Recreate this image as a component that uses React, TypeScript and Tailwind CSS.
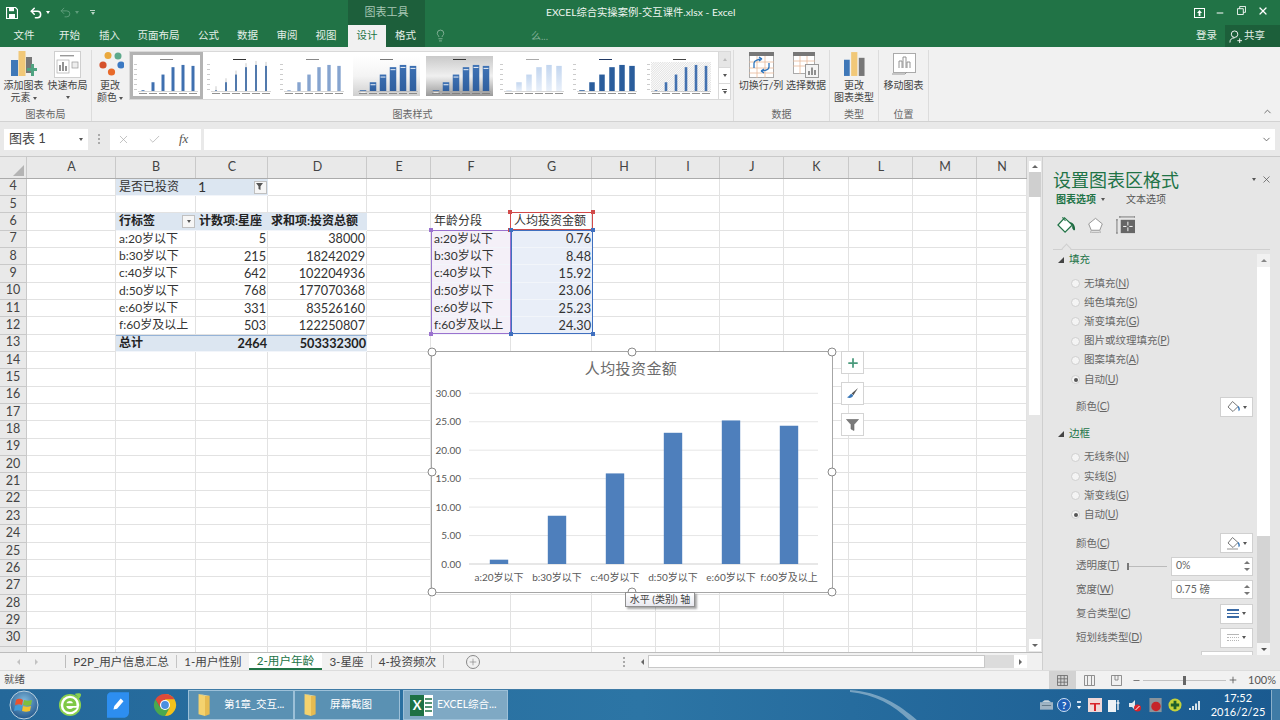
import React from "react";
import { Undo2, Redo2, Lightbulb, ChevronUp, ChevronDown, X, Check, Plus, Minus } from "lucide-react";

const VALUES = [0.76, 8.48, 15.92, 23.06, 25.23, 24.3];

function Tri({ className = "" }: { className?: string }) {
  return <span className={"inline-block w-0 h-0 border-l-[2.5px] border-r-[2.5px] border-t-[3px] border-l-transparent border-r-transparent border-t-[#555] " + className} />;
}

function Thumb({ v, i }: { v: any; i: number }) {
  const xs = [6, 16, 26, 36, 46, 56];
  return (
    <svg viewBox="0 0 67 40" className="w-[67px] h-[40px] shrink-0">
      <defs>
        <linearGradient id={"tb" + i} x1="0" y1="0" x2="0" y2="1">
          <stop offset="0" stopColor={v.bg1} />
          <stop offset="0.5" stopColor={v.mid || v.bg1} />
          <stop offset="1" stopColor={v.bg2} />
        </linearGradient>
        <linearGradient id={"tc" + i} x1="0" y1="0" x2="0" y2="1">
          <stop offset="0" stopColor={v.bar} />
          <stop offset="1" stopColor={v.bar2 || v.bar} />
        </linearGradient>
        <pattern id={"th" + i} width="1.6" height="1.6" patternUnits="userSpaceOnUse" patternTransform="rotate(45)">
          <rect width="0.7" height="1.6" fill="#dcdcdc" />
        </pattern>
      </defs>
      <rect width="67" height="40" fill={"url(#tb" + i + ")"} />
      {v.hatch && <rect x="5" y="6" width="60" height="30" fill={"url(#th" + i + ")"} />}
      <rect x="27" y="3" width="13" height="1" fill={v.title} />
      {!v.labels &&
        [8, 13, 18, 23, 28, 33].map((y) => <rect key={y} x="1" y={y} width="3" height="0.6" fill="#aaa" />)}
      {VALUES.map((val, k) => {
        const h = (val / 30) * 31;
        return (
          <g key={k}>
            {v.err && <rect x={xs[k] + 3.7} y={35 - h - 4} width="0.6" height={h + 4} fill="#aaa" />}
            <rect x={xs[k] + 4 - v.w / 2} y={35 - h} width={v.w} height={h} fill={"url(#tc" + i + ")"} />
            {v.labels && <rect x={xs[k] + 1.5} y={35 - h + 2} width="5" height="1" fill="#fff" opacity="0.9" />}
            <rect x={xs[k]} y="37" width="8" height="0.8" fill="#777" />
          </g>
        );
      })}
      <rect x="5" y="35" width="60" height="0.4" fill="#999" />
    </svg>
  );
}

const THUMBS = [
  { bg1: "#fff", bg2: "#fff", bar: "#3f70b0", w: 3, title: "#888" },
  { bg1: "#fff", bg2: "#fff", bar: "#2d5f9f", w: 1.6, title: "#333", err: true },
  { bg1: "#fff", bg2: "#fff", bar: "#86a4cf", w: 3.4, title: "#888" },
  { bg1: "#ffffff", mid: "#f4f4f4", bg2: "#cfcfcf", bar: "#3b6fb2", bar2: "#2f5f9f", w: 6.5, title: "#777", labels: true },
  { bg1: "#c9c9c9", mid: "#f0f0f0", bg2: "#9a9a9a", bar: "#3f73b5", bar2: "#2f5f9f", w: 6.5, title: "#333", labels: true },
  { bg1: "#fff", bg2: "#fff", bar: "#c3d6ef", bar2: "#e9f0fa", w: 5.5, title: "#aaa" },
  { bg1: "#fff", bg2: "#fff", bar: "#2a5d9c", w: 5.5, title: "#203864" },
  { bg1: "#fff", bg2: "#fff", bar: "#4472b0", w: 2.6, title: "#444", hatch: true },
];

function BigBtn({ w, icon, lines, drop }: { w: string; icon: React.ReactNode; lines: string[]; drop?: boolean }) {
  return (
    <div className={"flex flex-col items-center shrink-0 " + w}>
      <div className="h-[29px] flex items-center justify-center">{icon}</div>
      {lines.map((l, i) => (
        <div key={l} className="h-[12px] leading-[12px] whitespace-nowrap text-[10px] text-[#444]">
          {l}
          {drop && lines.length > 1 && i === lines.length - 1 && <Tri className="ml-[2px] align-middle" />}
        </div>
      ))}
      {drop && lines.length === 1 && (
        <div className="h-[12px] flex items-center">
          <Tri />
        </div>
      )}
    </div>
  );
}

function Group({ w, label, children, last }: { w: string; label: string; children: React.ReactNode; last?: boolean }) {
  return (
    <div className={"flex flex-col shrink-0 h-full " + w + (last ? "" : " border-r border-[#dcdcdc]")}>
      <div className="h-[59px] flex items-start">{children}</div>
      <div className="h-[14px] flex items-center justify-center text-[10px] leading-none text-[#666]">{label}</div>
    </div>
  );
}

function Bars({ className = "" }: { className?: string }) {
  return (
    <svg viewBox="0 0 22 26" className={className}>
      <rect x="0" y="8" width="6" height="17" fill="#3f78b8" />
      <rect x="7.5" y="0" width="6.5" height="25" fill="#f1c878" />
      <rect x="15.5" y="6" width="6" height="19" fill="#777" />
    </svg>
  );
}

function TitleBar() {
  return (
    <div className="h-[25px] flex bg-[#217346] text-white shrink-0">
      <div className="w-[348px] flex items-center pl-[6px] text-white">
        <svg viewBox="0 0 12 12" className="w-[12px] h-[12px] ml-0">
          <path d="M0.5 0.5H9.5L11.5 2.5V11.5H0.5Z" fill="none" stroke="#fff" strokeWidth="1.2" />
          <rect x="3" y="1" width="5" height="3.2" fill="#fff" />
          <rect x="3" y="7" width="6" height="4" fill="#fff" />
        </svg>
        <Undo2 size={14} strokeWidth={2.6} className="ml-[11px] text-white" />
        <span className="ml-[3px] w-0 h-0 border-l-[2px] border-r-[2px] border-t-[3px] border-l-transparent border-r-transparent border-t-white" />
        <Redo2 size={13} strokeWidth={1.8} className="ml-[9px] text-[#5d9c7a] -scale-x-100" />
        <span className="ml-[3px] w-0 h-0 border-l-[2px] border-r-[2px] border-t-[3px] border-l-transparent border-r-transparent border-t-[#5d9c7a]" />
        <span className="ml-[11px] flex flex-col items-center gap-[1px]">
          <span className="w-[5px] h-[1px] bg-[#b8d4c4]" />
          <span className="w-0 h-0 border-l-[2px] border-r-[2px] border-t-[3px] border-l-transparent border-r-transparent border-t-[#b8d4c4]" />
        </span>
      </div>
      <div className="w-[77px] bg-[#1d5f3b] flex items-center justify-center text-[11px] text-[#a7c7b4]">图表工具</div>
      <div className="w-[121px]" />
      <div className="w-[240px] text-[10.3px] leading-[25px] whitespace-nowrap text-[#eef5f0]">EXCEL综合实操案例-交互课件.xlsx - Excel</div>
      <div className="flex-1" />
      <div className="w-[86px] flex items-center text-white">
        <svg viewBox="0 0 11 10" className="w-[11px] h-[10px]">
          <rect x="0.5" y="0.5" width="10" height="9" fill="none" stroke="#fff" />
          <path d="M5.5 2L8 5H6.4V8H4.6V5H3Z" fill="#fff" />
        </svg>
        <Minus size={10} strokeWidth={2.4} className="ml-[10px]" />
        <svg viewBox="0 0 10 10" className="w-[9px] h-[9px] ml-[12px] -mt-[4px]">
          <path d="M0.5 3H7V9.5H0.5Z M3 3V0.5H9.5V7H7" fill="none" stroke="#fff" strokeWidth="1" />
        </svg>
        <X size={12} strokeWidth={2.4} className="ml-[11px] -mt-[4px]" />
      </div>
    </div>
  );
}

const TABS = [
  ["文件", "w-[48px]"],
  ["开始", "w-[43px]"],
  ["插入", "w-[37px]"],
  ["页面布局", "w-[61px]"],
  ["公式", "w-[39px]"],
  ["数据", "w-[39px]"],
  ["审阅", "w-[40px]"],
  ["视图", "w-[38px]"],
];

function TabRow() {
  return (
    <div className="h-[22px] flex bg-[#217346] text-white shrink-0">
      {TABS.map(([t, w]) => (
        <div key={t} className={w + " flex items-center justify-center text-[10.5px] text-[#e4efe8]"}>
          {t}
        </div>
      ))}
      <div className="w-[3px]" />
      <div className="w-[38px] bg-[#f1f1f1] text-[#217346] flex items-center justify-center text-[10.5px]">设计</div>
      <div className="w-[39px] bg-[#1d5f3b] flex items-center justify-center text-[10.5px] text-[#e4efe8]">格式</div>
      <Lightbulb size={13} strokeWidth={1.3} className="ml-[9px] mt-[4px] text-[#a7c7b4]" />
      <div className="ml-[84px] text-[10px] leading-[22px] text-[#7fae94]">么...</div>
      <div className="flex-1" />
      <div className="w-[29px] flex items-center text-[10.5px] text-[#e4efe8]">登录</div>
      <div className="w-[55px] bg-[#1c5f3a] flex items-center pl-[4px] text-[10.5px] text-[#e4efe8]">
        <svg viewBox="0 0 14 14" className="w-[13px] h-[13px] mr-[2px]">
          <circle cx="6" cy="4.5" r="3.5" fill="none" stroke="#fff" strokeWidth="1" />
          <path d="M1 13.5C1 10 3 8.5 6 8.5M9 11.5H14M11.5 9V14" fill="none" stroke="#fff" strokeWidth="1" />
        </svg>
        共享
      </div>
    </div>
  );
}

function Ribbon() {
  return (
    <div className="h-[75px] bg-[#f1f1f1] border-b border-[#d2d2d2] flex shrink-0 pt-[3px] relative">
      <Group w="w-[92px]" label="图表布局">
        <div className="w-[47px] flex justify-center">
          <BigBtn
            w="w-[47px]"
            lines={["添加图表", "元素"]}
            drop
            icon={
              <svg viewBox="0 0 26 27" className="w-[26px] h-[27px]">
                <rect x="0" y="9" width="7" height="16" fill="#3f78b8" />
                <rect x="7.5" y="0" width="7" height="25" fill="#f1c878" />
                <rect x="15" y="6" width="6" height="16" fill="#777" />
                <path d="M16 17h4v-4h3v4h3v3h-3v5h-3v-5h-4z" fill="#4fa381" />
              </svg>
            }
          />
        </div>
        <BigBtn
          w="w-[41px]"
          lines={["快速布局"]}
          drop
          icon={
            <svg viewBox="0 0 27 27" className="w-[27px] h-[27px]">
              <rect x="0.5" y="0.5" width="26" height="26" fill="#fff" stroke="#cfcfcf" />
              <rect x="6" y="4" width="14" height="1.4" fill="#999" />
              <rect x="3" y="9" width="12" height="13" fill="none" stroke="#aaa" strokeWidth="0.7" />
              <path d="M6 20V14M9 20V11M12 20V15" stroke="#888" strokeWidth="1.8" />
              <rect x="18" y="11" width="6" height="6" fill="#eee" stroke="#999" strokeWidth="0.7" />
            </svg>
          }
        />
      </Group>
      <Group w="w-[642px]" label="图表样式">
        <BigBtn
          w="w-[36px]"
          lines={["更改", "颜色"]}
          drop
          icon={
            <svg viewBox="0 0 28 28" className="w-[28px] h-[28px]">
              <circle cx="12" cy="4.5" r="3.5" fill="#eaa83c" />
              <circle cx="22" cy="5" r="3.5" fill="#5da98b" />
              <circle cx="7" cy="14" r="3.6" fill="#d5512b" />
              <circle cx="25" cy="14" r="3.6" fill="#3b79c3" />
              <circle cx="15.5" cy="21" r="3.6" fill="#e86a2a" />
            </svg>
          }
        />
        <div className="flex h-[49px] mt-[1px] ml-[1px] bg-white border border-[#d9d9d9] w-[602px]">
          <div className="flex items-center">
            <div className="border-[3px] border-[#b3b3b3] bg-white h-[47px] w-[73px] flex items-center justify-center">
              <Thumb v={THUMBS[0]} i={0} />
            </div>
            <div className="flex items-center gap-[6.3px] pl-[3px]">
              {THUMBS.slice(1).map((t, i) => (
                <Thumb key={i} v={t} i={i + 1} />
              ))}
            </div>
          </div>
          <div className="flex-1" />
          <div className="w-[12px] flex flex-col border-l border-[#d9d9d9]">
            <div className="flex-1 flex items-center justify-center bg-[#e6e6e6] border-b border-[#d9d9d9]">
              <span className="w-0 h-0 border-l-[2px] border-r-[2px] border-b-[3px] border-l-transparent border-r-transparent border-b-[#bbb]" />
            </div>
            <div className="flex-1 flex items-center justify-center border-b border-[#d9d9d9]">
              <Tri />
            </div>
            <div className="flex-1 flex flex-col items-center justify-center gap-[1px]">
              <span className="w-[5px] h-[1px] bg-[#555]" />
              <Tri />
            </div>
          </div>
        </div>
      </Group>
      <Group w="w-[96px]" label="数据">
        <div className="w-[4px]" />
        <BigBtn
          w="w-[46px]"
          lines={["切换行/列"]}
          icon={
            <svg viewBox="0 0 25 26" className="w-[25px] h-[26px]">
              <rect x="0.5" y="0.5" width="24" height="25" fill="#fff" stroke="#aaa" />
              <rect x="0" y="0" width="25" height="4" fill="#777" />
              <path d="M0 10H25M0 16H25M0 21H25M8 4V26M16 4V26" stroke="#e9b999" strokeWidth="0.8" />
              <path d="M5 16V11C5 8.5 10 7 13 7M13 7L10 5M13 7L10 9" fill="none" stroke="#2d75bd" strokeWidth="1.3" />
              <path d="M20 11V15C20 18 15 19 12 19M12 19L15 17M12 19L15 21" fill="none" stroke="#2d75bd" strokeWidth="1.3" />
            </svg>
          }
        />
        <BigBtn
          w="w-[44px]"
          lines={["选择数据"]}
          icon={
            <svg viewBox="0 0 26 26" className="w-[26px] h-[26px]">
              <rect x="0.5" y="0.5" width="21" height="21" fill="#fff" stroke="#aaa" />
              <rect x="0" y="0" width="22" height="4" fill="#777" />
              <path d="M0 9H22M0 14H22M7 4V22M14 4V22" stroke="#e9b999" strokeWidth="0.8" />
              <rect x="12.5" y="12.5" width="13" height="13" fill="#f4f4f4" stroke="#999" />
              <path d="M16 23V19M19 23V15.5M22 23V18" stroke="#777" strokeWidth="1.6" />
            </svg>
          }
        />
      </Group>
      <Group w="w-[49px]" label="类型">
        <BigBtn w="w-[48px]" lines={["更改", "图表类型"]} icon={<Bars className="w-[21px] h-[27px]" />} />
      </Group>
      <Group w="w-[50px]" label="位置">
        <BigBtn
          w="w-[49px]"
          lines={["移动图表"]}
          icon={
            <svg viewBox="0 0 24 24" className="w-[24px] h-[24px]">
              <rect x="1.5" y="0.5" width="22" height="19" fill="#fff" stroke="#aaa" />
              <path d="M7 15V8H10V15M11 15V4H14V15M15 15V9H18V15" fill="none" stroke="#888" strokeWidth="0.9" />
              <path d="M0 21H13L15 19" fill="none" stroke="#999" />
            </svg>
          }
        />
      </Group>
      <div className="flex-1" />
      <ChevronUp size={11} className="absolute right-[7px] bottom-[4px] text-[#666]" />
    </div>
  );
}

function FormulaBar() {
  return (
    <div className="h-[35px] bg-[#e9e9e9] flex items-center pl-[4px] pr-[5px] shrink-0 border-b border-[#c9c9c9]">
      <div className="w-[84px] h-[21px] bg-white flex items-center justify-between px-[5px] text-[13px] text-[#444]">
        图表 1
        <Tri />
      </div>
      <div className="w-[22px] flex flex-col items-center gap-[2px]">
        <span className="w-[2px] h-[2px] bg-[#aaa]" />
        <span className="w-[2px] h-[2px] bg-[#aaa]" />
        <span className="w-[2px] h-[2px] bg-[#aaa]" />
      </div>
      <div className="w-[91px] h-[21px] bg-white flex items-center pl-[7px] gap-[18px] text-[#aaa]">
        <X size={13} strokeWidth={1.3} />
        <Check size={13} strokeWidth={1.3} />
        <span className="[font-family:'Liberation_Serif',serif] italic text-[13px] text-[#555]">fx</span>
      </div>
      <div className="w-[3px]" />
      <div className="flex-1 h-[21px] bg-white flex items-center justify-end pr-[3px]">
        <ChevronDown size={11} className="text-[#666]" />
      </div>
    </div>
  );
}

const COLS = ["A", "B", "C", "D", "E", "F", "G", "H", "I", "J", "K", "L", "M", "N"];
const GRID = "grid grid-cols-[27px_89px_80px_72px_99px_64px_80px_81px_64px_64px_64px_65px_64px_64px_50px] auto-rows-[17.35px]";

type C = { t?: string; r?: boolean; b?: boolean; bg?: string; big?: boolean; extra?: React.ReactNode };

function cellsFor(row: number): Record<string, C> {
  const m: Record<string, C> = {};
  const P = "bg-[#dce6f1]";
  if (row === 4) {
    m.B = { t: "是否已投资", bg: P };
    m.C = {
      t: "1",
      bg: P,
      big: true,
      extra: (
        <span className="absolute right-[1px] top-[2px] w-[13px] h-[13px] bg-[#f6f6f6] border border-[#c0c0c0] flex items-center justify-center">
          <svg viewBox="0 0 9 8" className="w-[9px] h-[8px]">
            <path d="M0 0H7L4.5 3.2V7L2.5 6V3.2Z M6 5H9M7 7H9" fill="#555" />
          </svg>
        </span>
      ),
    };
  }
  if (row === 6) {
    m.B = {
      t: "行标签",
      b: true,
      bg: P,
      extra: (
        <span className="absolute right-[1px] top-[2px] w-[13px] h-[13px] bg-[#f6f6f6] border border-[#c0c0c0] flex items-center justify-center">
          <Tri />
        </span>
      ),
    };
    m.C = { t: "计数项:星座", b: true, bg: P };
    m.D = { t: "求和项:投资总额", b: true, bg: P };
    m.F = { t: "年龄分段" };
    m.G = { t: "人均投资金额" };
  }
  const pv: Record<number, string[]> = {
    7: ["a:20岁以下", "5", "38000", "0.76"],
    8: ["b:30岁以下", "215", "18242029", "8.48"],
    9: ["c:40岁以下", "642", "102204936", "15.92"],
    10: ["d:50岁以下", "768", "177070368", "23.06"],
    11: ["e:60岁以下", "331", "83526160", "25.23"],
    12: ["f:60岁及以上", "503", "122250807", "24.30"],
  };
  if (pv[row]) {
    const [a, c, d, g] = pv[row];
    m.B = { t: a };
    m.C = { t: c, r: true };
    m.D = { t: d, r: true };
    m.F = { t: a, bg: "bg-[#f4f0f8]" };
    m.G = { t: g, r: true, bg: "bg-[#e9eef8]" };
  }
  if (row === 13) {
    m.B = { t: "总计", b: true, bg: P };
    m.C = { t: "2464", b: true, r: true, bg: P };
    m.D = { t: "503332300", b: true, r: true, bg: P };
  }
  return m;
}

function Sheet() {
  const rows = Array.from({ length: 28 }, (_, i) => i + 4);
  return (
    <div className="relative w-[1027px] h-[495px] overflow-hidden bg-white text-[#333]">
      <div className="h-[21.5px] grid grid-cols-[27px_89px_80px_72px_99px_64px_80px_81px_64px_64px_64px_65px_64px_64px_50px] bg-[#e9e9e9] border-b border-[#ababab]">
        <div className="border-r border-[#c9c9c9] flex items-end justify-end p-[2px]">
          <span className="block w-0 h-0 border-b-[11px] border-l-[11px] border-b-[#b4b4b4] border-l-transparent" />
        </div>
        {COLS.map((c) => (
          <div key={c} className="flex items-center justify-center pl-[1px] border-r border-[#c9c9c9] text-[12.5px] text-[#444]">
            {c}
          </div>
        ))}
      </div>
      <div className={GRID}>
        {rows.map((row) => {
          const m = cellsFor(row);
          return (
            <React.Fragment key={row}>
              <div className="bg-[#e9e9e9] border-r border-b border-[#c9c9c9] flex items-center justify-center text-[12.5px] text-[#444]">
                {row < 31 ? row : ""}
              </div>
              {COLS.map((c) => {
                const cell = m[c] || {};
                return (
                  <div
                    key={c}
                    className={
                      "relative flex items-center whitespace-nowrap overflow-visible leading-none " +
                      (cell.bg ? cell.bg + " border-b border-[#f2f5fa] " : "border-r border-b border-[#e2e2e2] ") +
                      (cell.r ? "justify-end pr-[1px] pl-[3px] text-[12.7px] " : cell.big ? "px-[2px] text-[14px] " : "px-[3px] text-[12px] ") +
                      (cell.b ? "font-bold text-[#222] " : "") +
                      (row === 13 && cell.bg ? "border-t border-t-[#95b3d7] " : "")
                    }
                  >
                    {cell.t}
                    {cell.extra}
                  </div>
                );
              })}
            </React.Fragment>
          );
        })}
      </div>
      <Range className="left-[431px] top-[72.5px] w-[80px] h-[104px] border-[#9a72cf]" dot="bg-[#9a72cf]" />
      <Range className="left-[510px] top-[55px] w-[83px] h-[18px] border-[#d14a4a]" dot="bg-[#d14a4a]" />
      <Range className="left-[511px] top-[73px] w-[82px] h-[104px] border-[#3f6fbf]" dot="bg-[#3f6fbf]" />
      <Chart />
    </div>
  );
}

function Range({ className, dot }: { className: string; dot: string }) {
  const corners = ["-left-[3px] -top-[3px]", "-right-[3px] -top-[3px]", "-left-[3px] -bottom-[3px]", "-right-[3px] -bottom-[3px]"];
  return (
    <div className={"absolute border-[1.5px] pointer-events-none " + className}>
      {corners.map((c) => (
        <span key={c} className={"absolute w-[4px] h-[4px] " + c + " " + dot} />
      ))}
    </div>
  );
}

function Chart() {
  const handles = [
    "left-0 top-0",
    "left-1/2 top-0",
    "left-full top-0",
    "left-0 top-1/2",
    "left-full top-1/2",
    "left-0 top-full",
    "left-1/2 top-full",
    "left-full top-full",
  ];
  const ticks = [0, 5, 10, 15, 20, 25, 30];
  const centers = [67, 125, 183, 241, 299, 357];
  const cats = ["a:20岁以下", "b:30岁以下", "c:40岁以下", "d:50岁以下", "e:60岁以下", "f:60岁及以上"];
  return (
    <div className="absolute left-[431px] top-[194px] w-[402px] h-[242px] bg-white border border-[#a6a6a6]">
      <svg viewBox="0 0 400 240" className="w-full h-full">
        <text x="199" y="22" textAnchor="middle" fontSize="15" fill="#6b6b6b" letterSpacing="0.4">人均投资金额</text>
        {ticks.map((t) => {
          const y = 212 - (t / 30) * 170.7;
          return (
            <g key={t}>
              <line x1="37" x2="386" y1={y} y2={y} stroke={t === 0 ? "#cfcfcf" : "#e6e6e6"} />
              <text x="29" y={y + 3.5} textAnchor="end" fontSize="10" fill="#595959">{t.toFixed(2)}</text>
            </g>
          );
        })}
        {VALUES.map((v, i) => {
          const h = (v / 30) * 170.7;
          return <rect key={i} x={centers[i] - 9.2} y={212 - h} width="18.4" height={h} fill="#4e7fbc" />;
        })}
        {cats.map((c, i) => (
          <text key={c} x={centers[i]} y="229" textAnchor="middle" fontSize="10" fill="#595959">{c}</text>
        ))}
      </svg>
      {handles.map((h) => (
        <span key={h} className={"absolute w-[9px] h-[9px] rounded-full bg-white border-[1.5px] border-[#8a8a8a] -translate-x-1/2 -translate-y-1/2 " + h} />
      ))}
      <div className="absolute left-[409px] -top-[1px] flex flex-col gap-[8px]">
        <div className="w-[23px] h-[23px] bg-white border border-[#d4d4d4] flex items-center justify-center">
          <Plus size={14} strokeWidth={3} className="text-[#4a9a7c]" />
        </div>
        <div className="w-[23px] h-[23px] bg-white border border-[#d4d4d4] flex items-center justify-center">
          <svg viewBox="0 0 14 12" className="w-[13px] h-[11px]">
            <path d="M13 0L6 6L8 8Z" fill="#555" />
            <path d="M6 6.5C4 6.5 4 9 1 10C3 11.5 7 11 7.8 8.2Z" fill="#3a78b8" />
          </svg>
        </div>
        <div className="w-[23px] h-[23px] bg-white border border-[#d4d4d4] flex items-center justify-center">
          <svg viewBox="0 0 13 12" className="w-[13px] h-[12px]">
            <path d="M0.5 0.5H12.5L8 5.5V11.5L5 10V5.5Z" fill="#7a7a7a" stroke="#666" strokeWidth="0.6" />
          </svg>
        </div>
      </div>
      <div className="absolute left-[193px] top-[240px] w-[70px] h-[15px] bg-gradient-to-b from-white to-[#e9e9f0] border border-[#8f8f8f] shadow-[2px_2px_2px_rgba(0,0,0,0.35)] text-[10px] leading-[13px] text-center text-[#444] whitespace-nowrap">
        水平 (类别) 轴
      </div>
    </div>
  );
}

function VScroll() {
  return (
    <div className="w-[15px] h-[495px] bg-[#e6e6e6] flex flex-col items-center pt-[4px] pb-[1px]">
      <div className="w-[12px] h-[11px] bg-white flex items-center justify-center">
        <span className="w-0 h-0 border-l-[3px] border-r-[3px] border-b-[3px] border-l-transparent border-r-transparent border-b-[#666]" />
      </div>
      <div className="w-[12px] h-[25px] bg-[#cfcfcf]" />
      <div className="w-[11px] h-[218px] bg-white" />
      <div className="flex-1" />
      <div className="w-[12px] h-[12px] bg-white flex items-center justify-center">
        <span className="w-0 h-0 border-l-[3px] border-r-[3px] border-t-[3px] border-l-transparent border-r-transparent border-t-[#666]" />
      </div>
    </div>
  );
}

function SheetTabs() {
  const tabs = [
    ["P2P_用户信息汇总", "w-[111px] border-r border-[#c4c4c4] my-[2px]", false],
    ["1-用户性别", "w-[72px]", false],
    ["2-用户年龄", "w-[73px]", true],
    ["3-星座", "w-[50px] border-r border-[#c4c4c4] my-[2px]", false],
    ["4-投资频次", "w-[72px] border-r border-[#c4c4c4] my-[2px]", false],
  ] as const;
  return (
    <div className="h-[18px] bg-[#f1f1f1] border-t border-[#bdbdbd] flex text-[11.6px] text-[#444]">
      <div className="w-[66px] flex items-center pl-[17px] gap-[15px] border-r border-[#bdbdbd] my-[2px]">
        <span className="w-0 h-0 border-t-[3px] border-b-[3px] border-r-[3px] border-t-transparent border-b-transparent border-r-[#c2c2c2]" />
        <span className="w-0 h-0 border-t-[3px] border-b-[3px] border-l-[3px] border-t-transparent border-b-transparent border-l-[#c2c2c2]" />
      </div>
      {tabs.map(([t, w, active]) => (
        <div
          key={t}
          className={
            w +
            " flex items-center justify-center whitespace-nowrap leading-none " +
            (active ? "bg-white text-[#217346] border-b-2 border-[#217346]" : "")
          }
        >
          {t}
        </div>
      ))}
      <div className="w-[22px]" />
      <div className="w-[14px] h-[14px] mt-[2px] rounded-full border border-[#888] flex items-center justify-center">
        <Plus size={10} strokeWidth={1.4} className="text-[#777]" />
      </div>
      <div className="w-[147px] flex items-center justify-end pr-[2px]">
        <div className="flex flex-col gap-[2px]">
          <span className="w-[2px] h-[2px] bg-[#aaa]" />
          <span className="w-[2px] h-[2px] bg-[#aaa]" />
          <span className="w-[2px] h-[2px] bg-[#aaa]" />
        </div>
      </div>
      <div className="w-[21px] flex items-center justify-end pr-[4px]">
        <span className="w-0 h-0 border-t-[3px] border-b-[3px] border-r-[3px] border-t-transparent border-b-transparent border-r-[#666]" />
      </div>
      <div className="w-[337px] bg-white my-[2px] border border-[#c8c8c8]" />
      <div className="w-[29px] bg-[#dcdcdc] my-[2px]" />
      <div className="w-[13px] bg-white my-[2px] flex items-center justify-center">
        <span className="w-0 h-0 border-t-[3px] border-b-[3px] border-l-[3px] border-t-transparent border-b-transparent border-l-[#666]" />
      </div>
    </div>
  );
}

function Radio({ label, k, on }: { label: string; k: string; on?: boolean }) {
  return (
    <div className="h-[19.2px] shrink-0 flex items-center pl-[28px] text-[10.5px] text-[#666]">
      <span className="w-[9px] h-[9px] rounded-full bg-[#f4f4f4] border border-[#cfcfcf] mr-[4px] flex items-center justify-center shrink-0">
        {on && <span className="w-[4px] h-[4px] rounded-full bg-[#555]" />}
      </span>
      {label}(<span className="underline">{k}</span>)
    </div>
  );
}

function Section({ t }: { t: string }) {
  return (
    <div className="h-[20px] shrink-0 flex items-center pl-[15px] text-[10.5px] text-[#217346]">
      <span className="w-0 h-0 border-l-[6px] border-b-[6px] border-l-transparent border-b-[#444] mr-[5px]" />
      {t}
    </div>
  );
}

function Lbl({ t, k }: { t: string; k: string }) {
  return (
    <span className="text-[10.5px] text-[#666] whitespace-nowrap">
      {t}(<span className="underline">{k}</span>)
    </span>
  );
}

function Bucket({ dim }: { dim?: boolean }) {
  return (
    <svg viewBox="0 0 13 13" className="w-[13px] h-[13px]">
      <path d="M5.5 0.5L11 5.5L6 10.5L1 6Z" fill="#fff" stroke="#777" />
      <path d="M11 5.5C12.5 7.5 12.5 9 11.5 9.5" fill="none" stroke="#3a78b8" strokeWidth="1.4" />
      {dim && <rect x="0" y="11" width="11" height="2" fill="#c9c9c9" />}
    </svg>
  );
}

function PickBtn({ children }: { children: React.ReactNode }) {
  return (
    <div className="w-[33px] h-[20px] bg-white border border-[#d0d0d0] flex items-center justify-center gap-[3px] shrink-0">
      {children}
      <Tri />
    </div>
  );
}

function Spin({ v }: { v: string }) {
  return (
    <div className="w-[82px] h-[19px] bg-white border border-[#d0d0d0] flex items-center justify-between pl-[4px] pr-[2px] text-[10.5px] text-[#666]">
      {v}
      <span className="flex flex-col gap-[4px]">
        <span className="w-0 h-0 border-l-[3px] border-r-[3px] border-b-[3px] border-l-transparent border-r-transparent border-b-[#777]" />
        <span className="w-0 h-0 border-l-[3px] border-r-[3px] border-t-[3px] border-l-transparent border-r-transparent border-t-[#777]" />
      </span>
    </div>
  );
}

function Pane() {
  return (
    <div className="w-[238px] bg-[#e6e6e6] border-l border-[#cfcfcf] flex flex-col overflow-hidden shrink-0">
      <div className="flex items-center justify-between pl-[10px] pr-[8px] pt-[12px] h-[34px]">
        <span className="text-[18px] leading-[22px] text-[#217346] whitespace-nowrap">设置图表区格式</span>
        <span className="flex items-center gap-[5px] -mt-[2px]">
          <Tri />
          <X size={11} strokeWidth={1.6} className="text-[#555]" />
        </span>
      </div>
      <div className="h-[16px] flex items-center pl-[13px] text-[10px]">
        <span className="text-[#217346] font-bold">图表选项</span>
        <Tri className="ml-[5px]" />
        <span className="ml-[21px] text-[#555]">文本选项</span>
      </div>
      <div className="h-[42px] flex items-center pl-[14px] pb-[5px]">
        <svg viewBox="0 0 20 20" className="w-[19px] h-[19px]">
          <path d="M8 2L16 9.5L8.5 17L1 9.5Z" fill="#fff" stroke="#217346" strokeWidth="1.3" />
          <path d="M6 1C6 3 7 4 9 5" fill="none" stroke="#217346" strokeWidth="1.1" />
          <path d="M13 6C17 7 19.5 10 19 14.5C18 16 16.5 14 16 12.5L16 9.5Z" fill="#1d6a41" />
        </svg>
        <svg viewBox="0 0 20 20" className="w-[17px] h-[18px] ml-[11px]">
          <path d="M10 1L18 7.5L15 15H5L2 7.5Z" fill="#fff" stroke="#888" />
          <path d="M5 15L4 18M15 15L16 18M5 17.5H15" stroke="#aaa" />
        </svg>
        <svg viewBox="0 0 20 20" className="w-[19px] h-[19px] ml-[12px]">
          <rect x="5" y="4" width="15" height="14" fill="#666" />
          <path d="M12.5 6V10M12.5 12V16M7.5 11H11M14 11H17.5" stroke="#fff" />
          <path d="M4 1H20M4 0V2M20 0V2M1 4V18M0 4H2M0 18H2" stroke="#777" />
        </svg>
      </div>
      <div className="h-[1px] bg-[#cfcfcf] mx-[10px] relative shrink-0">
        <span className="absolute left-[10px] -top-[4px] w-[7px] h-[7px] rotate-45 bg-[#e6e6e6] border-l border-t border-[#cfcfcf]" />
      </div>
      <div className="flex flex-1 min-h-0 pb-[15px]">
        <div className="w-[214px] overflow-hidden flex flex-col">
          <Section t="填充" />
          <div className="h-[4px] shrink-0" />
          <Radio label="无填充" k="N" />
          <Radio label="纯色填充" k="S" />
          <Radio label="渐变填充" k="G" />
          <Radio label="图片或纹理填充" k="P" />
          <Radio label="图案填充" k="A" />
          <Radio label="自动" k="U" on />
          <div className="h-[8px] shrink-0" />
          <div className="h-[20px] shrink-0 flex items-center justify-between pl-[33px] pr-[4px]">
            <Lbl t="颜色" k="C" />
            <PickBtn>
              <Bucket />
            </PickBtn>
          </div>
          <div className="h-[7px] shrink-0" />
          <Section t="边框" />
          <div className="h-[3.5px] shrink-0" />
          <Radio label="无线条" k="N" />
          <Radio label="实线" k="S" />
          <Radio label="渐变线" k="G" />
          <Radio label="自动" k="U" on />
          <div className="h-[8px] shrink-0" />
          <div className="h-[22px] shrink-0 flex items-center justify-between pl-[33px] pr-[4px]">
            <Lbl t="颜色" k="C" />
            <PickBtn>
              <Bucket dim />
            </PickBtn>
          </div>
          <div className="h-[23.5px] shrink-0 flex items-center justify-between pl-[33px] pr-[4px]">
            <span className="flex items-center">
              <Lbl t="透明度" k="T" />
              <span className="w-[2px] h-[7px] bg-[#777] ml-[8px]" />
              <span className="w-[38px] h-[1px] bg-[#bbb]" />
            </span>
            <Spin v="0%" />
          </div>
          <div className="h-[24px] shrink-0 flex items-center justify-between pl-[33px] pr-[4px]">
            <Lbl t="宽度" k="W" />
            <Spin v="0.75 磅" />
          </div>
          <div className="h-[24px] shrink-0 flex items-center justify-between pl-[33px] pr-[4px]">
            <Lbl t="复合类型" k="C" />
            <PickBtn>
              <span className="flex flex-col gap-[2px]">
                <span className="w-[12px] h-[2px] bg-[#3a6aa5]" />
                <span className="w-[12px] h-[1px] bg-[#3a6aa5]" />
                <span className="w-[12px] h-[2px] bg-[#3a6aa5]" />
              </span>
            </PickBtn>
          </div>
          <div className="h-[24px] shrink-0 flex items-center justify-between pl-[33px] pr-[4px]">
            <Lbl t="短划线类型" k="D" />
            <PickBtn>
              <span className="flex flex-col gap-[2px] opacity-60">
                <span className="w-[12px] h-[1px] bg-[#888]" />
                <span className="w-[12px] border-t border-dotted border-[#888]" />
                <span className="w-[12px] border-t border-dotted border-[#888]" />
              </span>
            </PickBtn>
          </div>
          <div className="w-[52px] h-[10px] ml-[158px] mt-[1px] bg-white border border-[#d0d0d0] shrink-0" />
        </div>
        <div className="w-[13px] mt-[4px] flex flex-col bg-[#d4d4d4]">
          <div className="h-[13px] bg-[#f1f1f1] flex items-center justify-center">
            <span className="w-0 h-0 border-l-[3px] border-r-[3px] border-b-[3px] border-l-transparent border-r-transparent border-b-[#888]" />
          </div>
          <div className="h-[269px] bg-white" />
          <div className="flex-1" />
          <div className="h-[12px] bg-[#f6f6f6] flex items-center justify-center">
            <span className="w-0 h-0 border-l-[3px] border-r-[3px] border-t-[3px] border-l-transparent border-r-transparent border-t-[#555]" />
          </div>
        </div>
      </div>
    </div>
  );
}

function StatusBar() {
  return (
    <div className="h-[19px] bg-[#f1f1f1] border-t border-[#dcdcdc] flex items-center shrink-0 text-[10.5px] text-[#555]">
      <span className="pl-[4px]">就绪</span>
      <div className="flex-1" />
      <div className="w-[27px] h-[18px] bg-[#d2d2d2] flex items-center justify-center">
        <svg viewBox="0 0 11 11" className="w-[11px] h-[11px]">
          <path d="M0.5 0.5H10.5V10.5H0.5ZM0.5 3.8H10.5M0.5 7.2H10.5M3.8 0.5V10.5M7.2 0.5V10.5" fill="none" stroke="#666" strokeWidth="0.8" />
        </svg>
      </div>
      <svg viewBox="0 0 11 11" className="w-[11px] h-[11px] ml-[8px]">
        <path d="M0.5 0.5H10.5V10.5H0.5ZM3.5 1V10M7.5 1V10" fill="none" stroke="#777" strokeWidth="0.8" />
      </svg>
      <svg viewBox="0 0 11 11" className="w-[11px] h-[11px] ml-[16px]">
        <path d="M0.5 0.5H10.5V10.5H0.5ZM4 0.5V5H7V0.5" fill="none" stroke="#777" strokeWidth="0.8" />
      </svg>
      <Minus size={9} strokeWidth={2} className="ml-[10px] text-[#555]" />
      <div className="w-[83px] h-[9px] mx-[2px] relative flex items-center">
        <span className="w-full h-[1px] bg-[#c2c2c2]" />
        <span className="absolute left-[40px] w-[3px] h-[9px] bg-[#666]" />
      </div>
      <Plus size={10} strokeWidth={2} className="text-[#555]" />
      <span className="ml-[10px] w-[32px] text-[11px] whitespace-nowrap">100%</span>
    </div>
  );
}

function Folder() {
  return (
    <svg viewBox="0 0 18 26" className="w-[18px] h-[24px] shrink-0">
      <path d="M2 1L9 3V25L2 23Z" fill="#f4d26e" />
      <path d="M9 3H14V23L9 25Z" fill="#e6bb51" />
      <path d="M2 1L14 3L9 3Z" fill="#fbe9a8" />
    </svg>
  );
}

function TaskBtn({ w, children, bright }: { w: string; children: React.ReactNode; bright?: boolean }) {
  return (
    <div
      className={
        w +
        " h-[30px] flex items-center border border-[#9cc0d8] whitespace-nowrap text-[10.5px] text-white " +
        (bright ? "bg-[#7fa9c4]" : "bg-[#5a91b3]")
      }
    >
      {children}
    </div>
  );
}

function Taskbar() {
  return (
    <div className="h-[31px] shrink-0 relative overflow-hidden flex items-center bg-gradient-to-r from-[#24689a] via-[#2c75a5] to-[#1a5a90] border-t border-[#3f7ba6]">
      <svg viewBox="0 0 90 31" className="absolute left-[850px] top-0 w-[90px] h-[31px]" aria-hidden="true">
        <path d="M0 0C30 2 50 15 68 31H60C45 16 25 4 0 2Z" fill="#b9d0df" opacity="0.55" />
      </svg>
      <div className="w-[46px] flex justify-center pl-[2px]">
        <svg viewBox="0 0 30 30" className="w-[30px] h-[30px]">
          <defs>
            <radialGradient id="orb" cx="0.5" cy="0.35" r="0.7">
              <stop offset="0" stopColor="#7fb9dd" />
              <stop offset="1" stopColor="#1c4f85" />
            </radialGradient>
          </defs>
          <circle cx="15" cy="15" r="14" fill="url(#orb)" stroke="#bcd2df" />
          <path d="M7 10C10 8 12 9 14 10L13 15C11 14 9 14 6 15Z" fill="#e8522d" />
          <path d="M15 10C18 11 20 11 23 10L22 15C19 16 17 16 14 15Z" fill="#7fbf3c" />
          <path d="M6 16C9 15 11 15 13 16L12 21C10 20 8 20 5 21Z" fill="#3f9bd8" />
          <path d="M14 16C17 17 19 17 22 16L21 21C18 22 16 22 13 21Z" fill="#f3c32c" />
        </svg>
      </div>
      <div className="w-[48px] flex justify-center">
        <svg viewBox="0 0 26 26" className="w-[24px] h-[24px]">
          <circle cx="13" cy="13" r="12" fill="#8ad04f" />
          <circle cx="13" cy="13" r="10" fill="#fff" />
          <path d="M13 5.5C17.5 5.5 20.5 9 20 14H9C9.3 17 13 18.5 16.5 16H20.5C18.5 20.5 12 22 8 19C3.5 15 6 5.5 13 5.5ZM9.2 11.2H16.2C15.6 7.8 10.2 7.6 9.2 11.2Z" fill="#7ec845" />
          <path d="M18 1C21 0 25 0 25 2C25 4 23 6 22 7C22 5 21 3 18 1Z" fill="#8ad04f" />
        </svg>
      </div>
      <div className="w-[48px] flex justify-center">
        <svg viewBox="0 0 24 28" className="w-[22px] h-[26px]">
          <path d="M4 0H24V22C24 25 22 28 18 28H0V4C0 2 2 0 4 0Z" fill="#2d8ef0" />
          <path d="M15 7L18 10L11 18L7 19L8 15Z" fill="#fff" />
        </svg>
      </div>
      <div className="w-[46px] flex justify-center">
        <svg viewBox="0 0 26 26" className="w-[24px] h-[24px]">
          <path d="M13 1A12 12 0 0 1 23.4 7H13Z M13 7H23.4L18 13Z" fill="#f2c21b" />
          <path d="M13 1A12 12 0 0 0 2.6 7L8 16L13 7H23.4A12 12 0 0 0 13 1Z" fill="#dd4a3a" />
          <path d="M2.6 7A12 12 0 0 0 13 25L18 16H8Z" fill="#4aa84f" />
          <path d="M13 25A12 12 0 0 0 23.4 7H13L18 16Z" fill="#f2c21b" />
          <circle cx="13" cy="13" r="5.5" fill="#fff" />
          <circle cx="13" cy="13" r="4.2" fill="#4a8fe0" />
        </svg>
      </div>
      <TaskBtn w="w-[106px]">
        <span className="ml-[7px] mr-[10px] flex">
          <Folder />
        </span>
        第1章_交互...
      </TaskBtn>
      <TaskBtn w="w-[106px]">
        <span className="ml-[7px] mr-[10px] flex">
          <Folder />
        </span>
        屏幕截图
      </TaskBtn>
      <div className="w-[3px]" />
      <TaskBtn w="w-[105px]" bright>
        <span className="ml-[6px] mr-[4px] flex h-[21px]">
          <span className="w-[14px] h-[21px] bg-[#1e7145] text-white text-[13px] font-bold leading-[21px] text-center">X</span>
          <svg viewBox="0 0 9 21" className="w-[9px] h-[21px]">
            <rect width="9" height="21" fill="#fff" />
            <path d="M1 4H8M1 8H8M1 12H8M1 16H8" stroke="#1e7145" strokeWidth="1.6" />
          </svg>
        </span>
        EXCEL综合...
      </TaskBtn>
      <div className="flex-1" />
      <div className="flex items-center pr-[12px]">
        <svg viewBox="0 0 14 10" className="w-[13px] h-[10px]"><rect x="0" y="2" width="14" height="8" fill="#9fb4c4" /><path d="M2 2L5 0H9L12 2" fill="#c8d4dc" /><rect x="2" y="5" width="10" height="1" fill="#5f7686" /></svg>
        <svg viewBox="0 0 14 14" className="w-[14px] h-[14px] ml-[4px]"><circle cx="7" cy="7" r="6.5" fill="#1f5fb8" stroke="#cfe0f2" /><text x="7" y="10.5" textAnchor="middle" fontSize="10" fontWeight="bold" fill="#fff">?</text></svg>
        <span className="flex flex-col items-center gap-[3px] ml-[6px] w-[4px]"><span className="w-[4px] h-[2px] bg-[#cfe0f2]" /><span className="w-0 h-0 border-l-[2px] border-r-[2px] border-t-[3px] border-l-transparent border-r-transparent border-t-white" /></span>
        <svg viewBox="0 0 14 14" className="w-[14px] h-[14px] ml-[7px]"><rect width="14" height="14" fill="#f0d8d8" /><path d="M2 5H12V6.5H8V13H6V6.5H2Z" fill="#d8232a" /></svg>
        <svg viewBox="0 0 14 14" className="w-[14px] h-[14px] ml-[5px]"><rect x="1" y="2" width="8" height="12" fill="#eef2f5" /><path d="M11 2V12M12.5 5H9.5" stroke="#eef2f5" strokeWidth="1.4" /></svg>
        <svg viewBox="0 0 14 14" className="w-[14px] h-[14px] ml-[7px]"><path d="M1 5H4L7 2V12L4 9H1Z" fill="#dfe8ee" /><circle cx="9.5" cy="10" r="3.5" fill="#d8232a" /><path d="M7.5 12L11.5 8" stroke="#fff" /></svg>
        <svg viewBox="0 0 14 16" className="w-[14px] h-[15px] ml-[7px]"><rect width="13" height="15" fill="#8a949c" /><circle cx="7" cy="9" r="5" fill="#c6262a" /></svg>
        <svg viewBox="0 0 15 15" className="w-[14px] h-[14px] ml-[5px]"><circle cx="7.5" cy="7.5" r="7" fill="#c5d23a" /><path d="M6 3H9V6H12V9H9V12H6V9H3V6H6Z" fill="#1f5f2b" /></svg>
        <svg viewBox="0 0 12 10" className="w-[12px] h-[10px] ml-[7px]"><path d="M0 8H2V10H0ZM3 6H5V10H3ZM6 3.5H8V10H6ZM9 1H11V10H9Z" fill="#d6e2ea" /></svg>
      </div>
      <div className="w-[50px] flex flex-col items-center text-[11px] leading-[14px] text-white whitespace-nowrap">
        <span>17:52</span>
        <span>2016/2/25</span>
      </div>
      <div className="w-[17px]" />
      <div className="absolute right-0 top-0 bottom-0 w-[9px] bg-[#3f7ba6] border-l border-[#8bb0ca]" />
    </div>
  );
}

export default function App() {
  return (
    <div className="w-[1280px] h-[720px] overflow-hidden flex flex-col bg-[#f1f1f1] [font-family:Lato,'Noto_Sans_CJK_SC',sans-serif]">
      <TitleBar />
      <TabRow />
      <Ribbon />
      <FormulaBar />
      <div className="h-[513px] flex shrink-0">
        <div className="w-[1042px] flex flex-col shrink-0">
          <div className="flex h-[495px]">
            <Sheet />
            <VScroll />
          </div>
          <SheetTabs />
        </div>
        <Pane />
      </div>
      <StatusBar />
      <Taskbar />
    </div>
  );
}
